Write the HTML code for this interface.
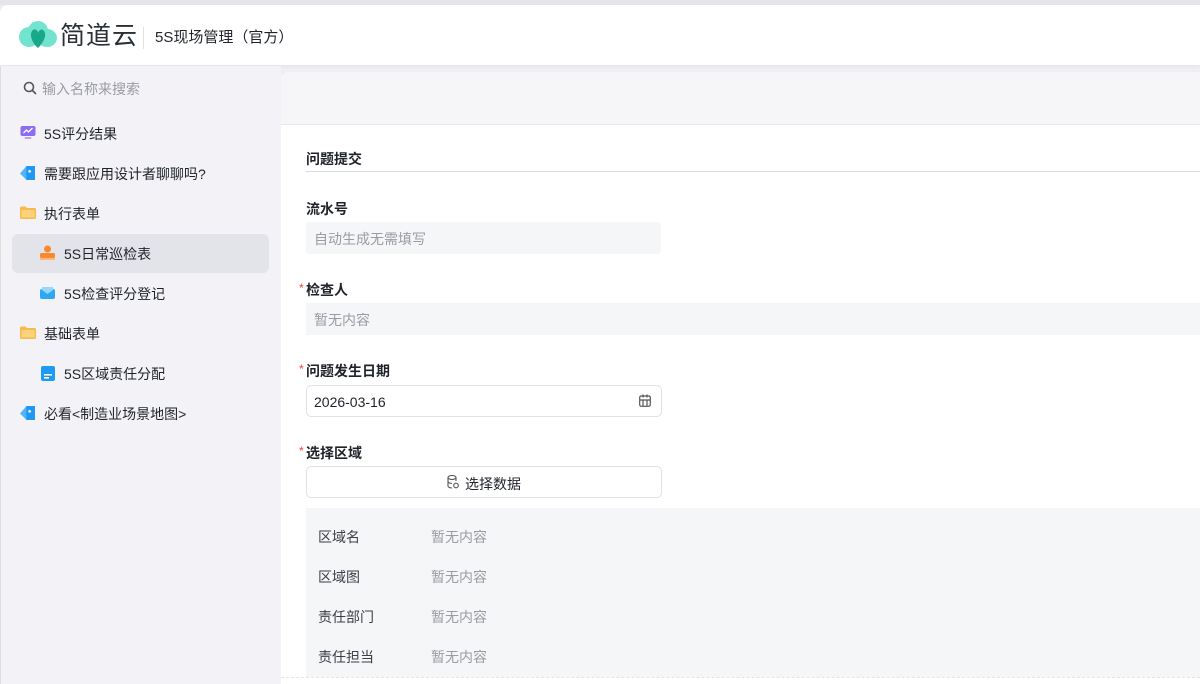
<!DOCTYPE html>
<html><head><meta charset="utf-8"><style>
*{margin:0;padding:0;box-sizing:border-box}
body{width:1200px;height:684px;overflow:hidden;background:#efeff3;font-family:"Liberation Sans","Noto Sans CJK SC",sans-serif;color:#1f2329;position:relative}
.abs{position:absolute}
.top{left:0;top:0;width:1200px;height:5px;background:#e6e6ea}
.header{left:0;top:5px;width:1200px;height:60px;background:#fff;border-top-left-radius:8px;box-shadow:0 1px 3px rgba(0,0,0,.06)}
.side{left:0;top:66px;width:281px;height:618px;background:#f3f3f7;box-shadow:inset 1px 0 0 #ddd}
.mi{position:absolute;font-size:14px;line-height:20px;color:#1f2329;white-space:nowrap}
.main{left:281px;top:72px;width:919px;height:612px;background:#fff;border-top-left-radius:8px;overflow:hidden}
.band{left:0;top:0;width:919px;height:53px;background:#f6f6f9;border-bottom:1px solid #e8e8ec}
.lbl{position:absolute;font-size:14px;font-weight:bold;line-height:20px;white-space:nowrap}
.req{color:#f04134;font-weight:normal;position:absolute;left:-7px;top:-2px;font-size:12px}
.ph{position:absolute;font-size:14px;color:#9a9ca3;line-height:20px;white-space:nowrap}
</style></head><body>
<div class="abs top"></div>
<div class="abs header">
 <svg class="abs" style="left:19px;top:15px" width="38" height="30" viewBox="0 0 38 30">
  <ellipse cx="10" cy="17" rx="10" ry="10" fill="#72e3cf"/>
  <ellipse cx="28" cy="18" rx="10" ry="9" fill="#72e3cf"/>
  <circle cx="19" cy="11" r="10" fill="#72e3cf"/>
  <path d="M19 28 C12 22 10 13 14 10 C17 8 19 11 19 13 C20 10 23 8 25 11 C28 15 25 22 19 28Z" fill="#1aa88b"/>
 </svg>
 <div class="abs" style="left:60px;top:15px;font-size:25px;line-height:32px;color:#2b2f36;letter-spacing:1px">简道云</div>
 <div class="abs" style="left:143px;top:22px;width:1px;height:22px;background:#e0e0e4"></div>
 <div class="abs" style="left:155px;top:22px;font-size:15px;line-height:22px;color:#1f2329">5S现场管理（官方）</div>
</div>
<div class="abs side">
 <svg class="abs" style="left:23px;top:15px" width="14" height="14" viewBox="0 0 14 14"><circle cx="6" cy="6" r="4.5" fill="none" stroke="#555" stroke-width="1.6"/><path d="M9.5 9.5L12.5 12.5" stroke="#555" stroke-width="1.6" stroke-linecap="round"/></svg>
 <div class="mi" style="left:42px;top:13px;color:#9a9ca3">输入名称来搜索</div>

 <svg class="abs" style="left:20px;top:59px" width="16" height="15" viewBox="0 0 15 15"><rect x="0" y="1" width="15" height="10" rx="2" fill="#8b6cf2"/><rect x="4" y="12" width="7" height="2" rx="1" fill="#b9a6f7"/><path d="M3 8l3-3 2 2 4-4" stroke="#fff" stroke-width="1.3" fill="none"/></svg>
 <div class="mi" style="left:44px;top:58px">5S评分结果</div>

 <svg class="abs" style="left:20px;top:99px" width="16" height="16" viewBox="0 0 15 15"><path d="M0 8L6 1H14V14H6Z" fill="#52b4f7"/><path d="M6 1H14V14H6Z" fill="#2196f3"/><circle cx="9" cy="6" r="1.3" fill="#fff"/></svg>
 <div class="mi" style="left:44px;top:98px">需要跟应用设计者聊聊吗?</div>

 <svg class="abs" style="left:20px;top:140px" width="16" height="13" viewBox="0 0 16 13"><path d="M0 2a1.5 1.5 0 0 1 1.5-1.5h4l1.5 1.5h7.5A1.5 1.5 0 0 1 16 3.5V11.5A1.5 1.5 0 0 1 14.5 13h-13A1.5 1.5 0 0 1 0 11.5Z" fill="#f7bb4c"/><rect x="1.5" y="4" width="13" height="7.5" rx="1" fill="#fcd37c"/></svg>
 <div class="mi" style="left:44px;top:138px">执行表单</div>

 <div class="abs" style="left:12px;top:168px;width:257px;height:39px;background:#e3e4ea;border-radius:6px"></div>
 <svg class="abs" style="left:40px;top:179px" width="15" height="15" viewBox="0 0 15 15"><circle cx="7.5" cy="4" r="3.5" fill="#f7892f"/><rect x="0" y="8" width="15" height="5" rx="1.5" fill="#f7892f"/><rect x="0" y="13" width="15" height="2" fill="#fbb97c"/></svg>
 <div class="mi" style="left:64px;top:178px">5S日常巡检表</div>

 <svg class="abs" style="left:40px;top:220px" width="15" height="13" viewBox="0 0 15 13"><rect x="0" y="3" width="15" height="10" rx="2" fill="#2ea8f2"/><path d="M2 4l5.5 4 5.5-4V1H2Z" fill="#9ad6fb"/></svg>
 <div class="mi" style="left:64px;top:218px">5S检查评分登记</div>

 <svg class="abs" style="left:20px;top:260px" width="16" height="13" viewBox="0 0 16 13"><path d="M0 2a1.5 1.5 0 0 1 1.5-1.5h4l1.5 1.5h7.5A1.5 1.5 0 0 1 16 3.5V11.5A1.5 1.5 0 0 1 14.5 13h-13A1.5 1.5 0 0 1 0 11.5Z" fill="#f7bb4c"/><rect x="1.5" y="4" width="13" height="7.5" rx="1" fill="#fcd37c"/></svg>
 <div class="mi" style="left:44px;top:258px">基础表单</div>

 <svg class="abs" style="left:41px;top:300px" width="14" height="15" viewBox="0 0 14 15"><rect width="14" height="15" rx="2" fill="#1e9bf0"/><rect x="3" y="8" width="8" height="1.6" fill="#fff"/><rect x="3" y="11" width="5" height="1.6" fill="#fff"/></svg>
 <div class="mi" style="left:64px;top:298px">5S区域责任分配</div>

 <svg class="abs" style="left:20px;top:339px" width="16" height="16" viewBox="0 0 15 15"><path d="M0 8L6 1H14V14H6Z" fill="#52b4f7"/><path d="M6 1H14V14H6Z" fill="#2196f3"/><circle cx="9" cy="6" r="1.3" fill="#fff"/></svg>
 <div class="mi" style="left:44px;top:338px">必看&lt;制造业场景地图&gt;</div>
</div>

<div class="abs main">
 <div class="abs band"></div>
 <div class="lbl" style="left:25px;top:77px">问题提交</div>
 <div class="abs" style="left:25px;top:99px;width:894px;height:1px;background:#d8d9dd"></div>

 <div class="lbl" style="left:25px;top:127px">流水号</div>
 <div class="abs" style="left:25px;top:150px;width:355px;height:32px;background:#f5f6f8;border-radius:3px"></div>
 <div class="ph" style="left:33px;top:157px">自动生成无需填写</div>

 <div class="lbl" style="left:25px;top:208px"><span class="req">*</span>检查人</div>
 <div class="abs" style="left:25px;top:231px;width:894px;height:32px;background:#f5f6f8"></div>
 <div class="ph" style="left:33px;top:238px">暂无内容</div>

 <div class="lbl" style="left:25px;top:289px"><span class="req">*</span>问题发生日期</div>
 <div class="abs" style="left:25px;top:313px;width:356px;height:32px;background:#fff;border:1px solid #e0e1e6;border-radius:5px"></div>
 <div class="abs" style="left:33px;top:320px;font-size:14px;line-height:20px;color:#1f2329">2026-03-16</div>
 <svg class="abs" style="left:358px;top:322px" width="12" height="13" viewBox="0 0 12 13"><rect x="0.7" y="2" width="10.6" height="10.3" rx="1.5" fill="none" stroke="#555" stroke-width="1.2"/><path d="M0.7 6H11.3M4 0.5V3.5M8 0.5V3.5M4 6V12M8 6V12" stroke="#555" stroke-width="1.2"/></svg>

 <div class="lbl" style="left:25px;top:371px"><span class="req">*</span>选择区域</div>
 <div class="abs" style="left:25px;top:394px;width:356px;height:32px;background:#fff;border:1px solid #e0e1e6;border-radius:5px"></div>
 <svg class="abs" style="left:166px;top:403px" width="12" height="14" viewBox="0 0 12 14"><ellipse cx="5" cy="2.5" rx="4" ry="2" fill="none" stroke="#555" stroke-width="1.1"/><path d="M1 2.5V11c0 1.1 1.8 2 4 2M9 2.5V6M1 6.5c0 1.1 1.8 2 4 2" fill="none" stroke="#555" stroke-width="1.1"/><circle cx="9" cy="10.5" r="2.3" fill="none" stroke="#555" stroke-width="1.1"/></svg>
 <div class="abs" style="left:184px;top:402px;font-size:14px;line-height:20px">选择数据</div>

 <div class="abs" style="left:25px;top:436px;width:894px;height:169px;background:#f5f6f8"></div>
 <div class="mi" style="left:37px;top:455px;color:#3b3f46">区域名</div><div class="ph" style="left:150px;top:455px">暂无内容</div>
 <div class="mi" style="left:37px;top:495px;color:#3b3f46">区域图</div><div class="ph" style="left:150px;top:495px">暂无内容</div>
 <div class="mi" style="left:37px;top:535px;color:#3b3f46">责任部门</div><div class="ph" style="left:150px;top:535px">暂无内容</div>
 <div class="mi" style="left:37px;top:575px;color:#3b3f46">责任担当</div><div class="ph" style="left:150px;top:575px">暂无内容</div>
 <div class="abs" style="left:0;top:605px;width:919px;height:1px;border-top:1px dashed #e4e5e8"></div>
</div>
</body></html>
